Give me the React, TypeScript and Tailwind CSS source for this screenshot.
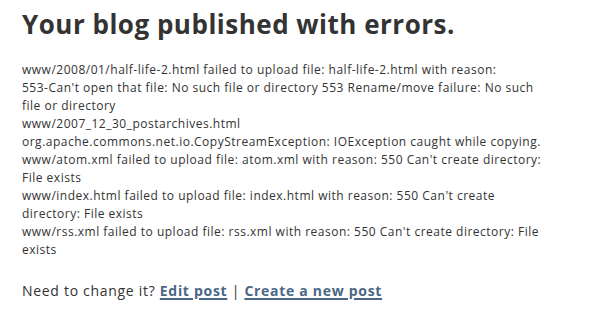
export default function App() {
  const errors: string[][] = [
    [
      'www/2008/01/half-life-2.html failed to upload file: half-life-2.html with reason:',
      "553-Can't open that file: No such file or directory 553 Rename/move failure: No such",
      'file or directory',
    ],
    ['www/2007_12_30_postarchives.html'],
    ['org.apache.commons.net.io.CopyStreamException: IOException caught while copying.'],
    ["www/atom.xml failed to upload file: atom.xml with reason: 550 Can't create directory:", 'File exists'],
    ["www/index.html failed to upload file: index.html with reason: 550 Can't create", 'directory: File exists'],
    ["www/rss.xml failed to upload file: rss.xml with reason: 550 Can't create directory: File", 'exists'],
  ];

  return (
    <div className="w-[597px] h-[320px] bg-white text-[#333] overflow-hidden font-['Open_Sans',sans-serif]">
      <div className="pl-[22px] pt-[9px]">
        <h1 className="text-[26px] leading-[30px] font-bold tracking-[0.5px] text-[#333]">
          Your blog published with errors.
        </h1>
        <div className="mt-[22px] text-[12px] leading-[18px] tracking-[0.5px] whitespace-nowrap">
          {errors.map((lines, i) => (
            <div key={i}>
              {lines.map((line, j) => (
                <div key={j}>{line}</div>
              ))}
            </div>
          ))}
        </div>
        <p className="mt-[22px] text-[14px] leading-[20px] tracking-[0.7px]">
          Need to change it?{' '}
          <a href="#" className="font-bold text-[#4a6785] underline decoration-2 underline-offset-2">
            Edit post
          </a>{' '}
          |{' '}
          <a href="#" className="font-bold text-[#4a6785] underline decoration-2 underline-offset-2">
            Create a new post
          </a>
        </p>
      </div>
    </div>
  );
}
